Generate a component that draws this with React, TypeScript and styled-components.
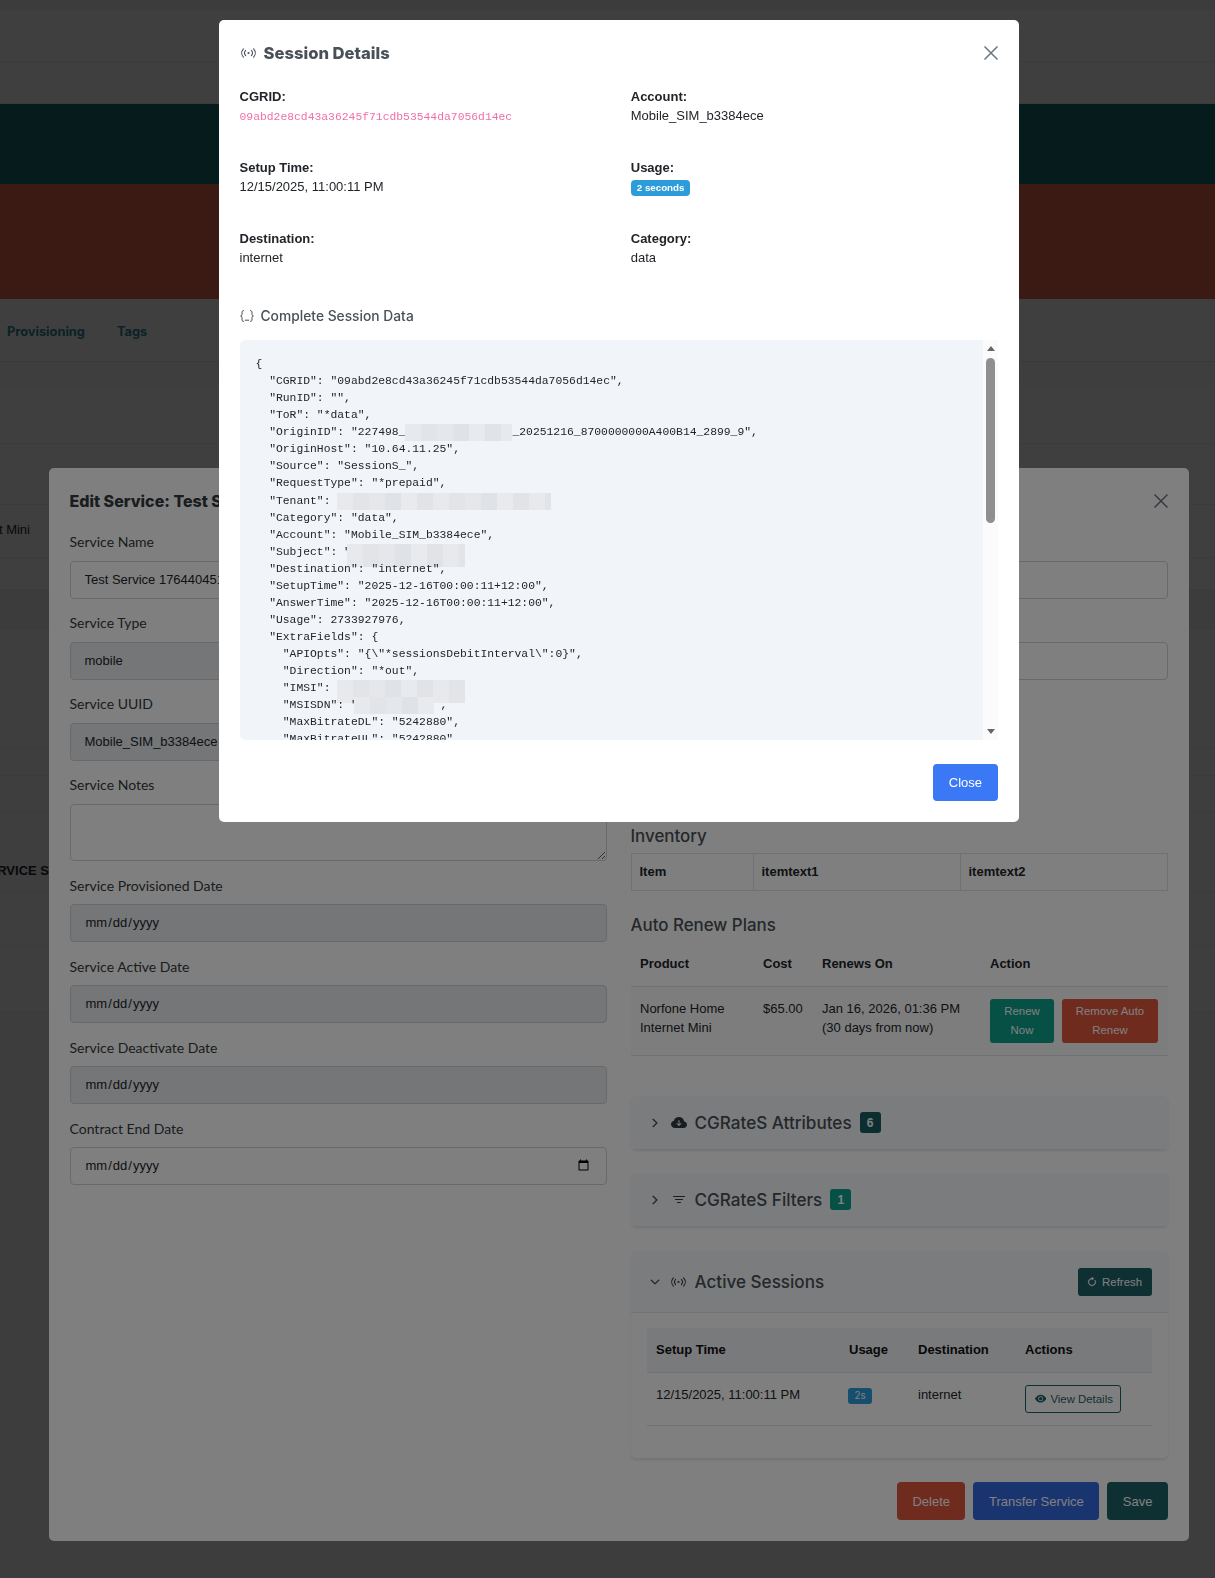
import React from "react";
import styled, { createGlobalStyle } from "styled-components";
import {
  BsChevronDown,
  BsChevronRight,
  BsArrowClockwise,
  BsCloudArrowDownFill,
  BsEyeFill,
  BsFilter,
} from "react-icons/bs";

const SANS = `"Liberation Sans", Arial, sans-serif`;
const HEAD = `Inter, "Open Sans", sans-serif`;
const LABEL = `Lato, "Open Sans", sans-serif`;

const GlobalStyle = createGlobalStyle`
  * { box-sizing: border-box; }
  html, body { margin: 0; height: 1578px; overflow: hidden; background: #fff; }
  body { font-family: ${SANS}; font-size: 13px; line-height: 1.5; color: #212529; }
`;

function CloseIcon() {
  return (
    <svg width="14" height="14" viewBox="0 0 14 14" fill="none" stroke="currentColor" strokeWidth="1.5">
      <path d="M0.5 0.5L13.5 13.5M13.5 0.5L0.5 13.5" />
    </svg>
  );
}

function BroadcastIcon() {
  return (
    <svg width="15" height="10" viewBox="0 0 15 10" fill="none" stroke="currentColor" strokeWidth="1.1" strokeLinecap="round">
      <path d="M2.4 0.8C0.2 3.2 0.2 6.8 2.4 9.2" />
      <path d="M4.6 2.4C3.4 3.8 3.4 6.2 4.6 7.6" />
      <path d="M10.4 2.4C11.6 3.8 11.6 6.2 10.4 7.6" />
      <path d="M12.6 0.8C14.8 3.2 14.8 6.8 12.6 9.2" />
      <circle cx="7.5" cy="5" r="1.1" fill="currentColor" stroke="none" />
    </svg>
  );
}

function BracesIcon() {
  return (
    <svg width="14" height="12" viewBox="0 0 14 12" fill="none" stroke="currentColor" strokeWidth="1" strokeLinecap="round">
      <path d="M3.5 0.6C2 0.6 2 1.6 2 3V4.5C2 5.4 1.4 5.9 0.6 6C1.4 6.1 2 6.6 2 7.5V9C2 10.4 2 11.4 3.5 11.4" />
      <path d="M10.5 0.6C12 0.6 12 1.6 12 3V4.5C12 5.4 12.6 5.9 13.4 6C12.6 6.1 12 6.6 12 7.5V9C12 10.4 12 11.4 10.5 11.4" />
      <path d="M5.2 10.2H8.8" />
    </svg>
  );
}

function JsonBody() {
  return (
    <>
      {`{
  "CGRID": "09abd2e8cd43a36245f71cdb53544da7056d14ec",
  "RunID": "",
  "ToR": "*data",
  "OriginID": "227498_`}
      <Blur $w={107} />
      {`_20251216_8700000000A400B14_2899_9",
  "OriginHost": "10.64.11.25",
  "Source": "SessionS_",
  "RequestType": "*prepaid",
  "Tenant": `}
      <Blur $w={214} />
      {`
  "Category": "data",
  "Account": "Mobile_SIM_b3384ece",
  "Subject": "`}
      <Blur $w={118} $tall $pull />
      {`
  "Destination": "internet",
  "SetupTime": "2025-12-16T00:00:11+12:00",
  "AnswerTime": "2025-12-16T00:00:11+12:00",
  "Usage": 2733927976,
  "ExtraFields": {
    "APIOpts": "{\\"*sessionsDebitInterval\\":0}",
    "Direction": "*out",
    "IMSI": `}
      <Blur $w={128} $tall />
      {`
    "MSISDN": "`}
      <Blur $w={80} $pull />
      {` ,
    "MaxBitrateDL": "5242880",
    "MaxBitrateUL": "5242880"`}
    </>
  );
}

export default function App() {
  return (
    <>
      <GlobalStyle />
      <Page>
        <Strip $h={10} $bg="#f0f0f0" />
        <Strip $h={35} />
        <Strip $h={17} $line />
        <Strip $h={42} $line />
        <Strip $h={80} $bg="#1a6c72" />
        <Strip $h={115} $bg="#f06b52" />
        <TabBar>
          <TabLink>Provisioning</TabLink>
          <TabLink>Tags</TabLink>
        </TabBar>
        <Strip $h={24} $bg="#fafafa" />
        <Strip $h={58} $line />
        <Strip $h={61} $line />
        <Strip $h={53} $line>
          <ClippedCell $w={30} $shift={-3}>
            Internet Mini
          </ClippedCell>
        </Strip>
        <Strip $h={32} $line />
        <Strip $h={39} $line $bg="#f0f0f0" />
        <Strip $h={119} $line $bg="#f8f8f8" />
        <Strip $h={28} $line $bg="#f8f8f8" />
        <Strip $h={36} $line $bg="#f8f8f8" />
        <Strip $h={81} $line $bg="#f8f8f8">
          <ClippedCell $w={49} $shift={38} $bold>
            SERVICE S
          </ClippedCell>
        </Strip>
        <Strip $h={53} $line $bg="#f8f8f8" />
        <Strip $h={66} $line $bg="#f8f8f8" />
      </Page>

      <Backdrop />
      <EditModal>
        <EditHeader>
          <EditTitle>Edit Service: Test Service 1764404512</EditTitle>
          <EditClose>
            <CloseIcon />
          </EditClose>
        </EditHeader>
        <EditColumns>
          <Column>
            <FormField>
              <FormLabel>Service Name</FormLabel>
              <TextInput readOnly value="Test Service 1764404512" />
            </FormField>
            <FormField>
              <FormLabel>Service Type</FormLabel>
              <TextInput disabled value="mobile" />
            </FormField>
            <FormField>
              <FormLabel>Service UUID</FormLabel>
              <TextInput disabled value="Mobile_SIM_b3384ece" />
            </FormField>
            <FormField $loose>
              <FormLabel>Service Notes</FormLabel>
              <NotesInput readOnly />
            </FormField>
            <FormField $loose>
              <FormLabel $tight>Service Provisioned Date</FormLabel>
              <TextInput type="date" disabled />
            </FormField>
            <FormField $loose>
              <FormLabel $tight>Service Active Date</FormLabel>
              <TextInput type="date" disabled />
            </FormField>
            <FormField $loose>
              <FormLabel $tight>Service Deactivate Date</FormLabel>
              <TextInput type="date" disabled />
            </FormField>
            <FormField $loose>
              <FormLabel $tight>Contract End Date</FormLabel>
              <TextInput type="date" />
            </FormField>
          </Column>

          <Column>
            <FormField>
              <FormLabel>Service Status</FormLabel>
              <TextInput readOnly value="" />
            </FormField>
            <FormField>
              <FormLabel>Customer</FormLabel>
              <TextInput readOnly value="" />
            </FormField>

            <InventoryTitle>Inventory</InventoryTitle>
            <InventoryTable>
              <tbody>
                <tr>
                  <InventoryCell $w={122}>Item</InventoryCell>
                  <InventoryCell $w={207}>itemtext1</InventoryCell>
                  <InventoryCell>itemtext2</InventoryCell>
                </tr>
              </tbody>
            </InventoryTable>

            <PlansTitle>Auto Renew Plans</PlansTitle>
            <PlansTable>
              <thead>
                <tr>
                  <PlansHead $w={123}>Product</PlansHead>
                  <PlansHead $w={59}>Cost</PlansHead>
                  <PlansHead $w={168}>Renews On</PlansHead>
                  <PlansHead>Action</PlansHead>
                </tr>
              </thead>
              <tbody>
                <tr>
                  <PlansCell>Norfone Home Internet Mini</PlansCell>
                  <PlansCell>$65.00</PlansCell>
                  <PlansCell>
                    Jan 16, 2026, 01:36 PM
                    <br />
                    (30 days from now)
                  </PlansCell>
                  <ActionCell>
                    <ActionRow>
                      <SmallButton $bg="#0ea08c" $w={64}>
                        Renew Now
                      </SmallButton>
                      <SmallButton $bg="#e0573f" $w={96}>
                        Remove Auto Renew
                      </SmallButton>
                    </ActionRow>
                  </ActionCell>
                </tr>
              </tbody>
            </PlansTable>

            <AccordionItem $top={40}>
              <AccordionHead>
                <ChevronSlot>
                  <BsChevronRight />
                </ChevronSlot>
                <AccordionIcon>
                  <BsCloudArrowDownFill />
                </AccordionIcon>
                <AccordionTitle>CGRateS Attributes</AccordionTitle>
                <CountBadge $bg="#1b5d63">6</CountBadge>
              </AccordionHead>
            </AccordionItem>

            <AccordionItem $top={24}>
              <AccordionHead>
                <ChevronSlot>
                  <BsChevronRight />
                </ChevronSlot>
                <AccordionIcon>
                  <BsFilter />
                </AccordionIcon>
                <AccordionTitle>CGRateS Filters</AccordionTitle>
                <CountBadge $bg="#0ea08c">1</CountBadge>
              </AccordionHead>
            </AccordionItem>

            <AccordionItem $top={25}>
              <AccordionHead $open>
                <ChevronSlot>
                  <BsChevronDown />
                </ChevronSlot>
                <AccordionIcon>
                  <BroadcastIcon />
                </AccordionIcon>
                <AccordionTitle>Active Sessions</AccordionTitle>
                <RefreshButton>
                  <BsArrowClockwise />
                  Refresh
                </RefreshButton>
              </AccordionHead>
              <AccordionBody>
                <SessionsTable>
                  <thead>
                    <tr>
                      <SessionsHead $w={193}>Setup Time</SessionsHead>
                      <SessionsHead $w={69}>Usage</SessionsHead>
                      <SessionsHead $w={107}>Destination</SessionsHead>
                      <SessionsHead>Actions</SessionsHead>
                    </tr>
                  </thead>
                  <tbody>
                    <tr>
                      <SessionsCell>12/15/2025, 11:00:11 PM</SessionsCell>
                      <SessionsCell>
                        <UsagePill>2s</UsagePill>
                      </SessionsCell>
                      <SessionsCell>internet</SessionsCell>
                      <SessionsCell>
                        <DetailsButton>
                          <BsEyeFill />
                          View Details
                        </DetailsButton>
                      </SessionsCell>
                    </tr>
                  </tbody>
                </SessionsTable>
              </AccordionBody>
            </AccordionItem>
          </Column>
        </EditColumns>
        <EditFooter>
          <FooterButton $bg="#e0573f">Delete</FooterButton>
          <FooterButton $bg="#3468e0">Transfer Service</FooterButton>
          <FooterButton $bg="#1d6165">Save</FooterButton>
        </EditFooter>
      </EditModal>

      <Backdrop />
      <SessionModal>
        <SessionHeader>
          <SessionTitleIcon>
            <BroadcastIcon />
          </SessionTitleIcon>
          <SessionTitle>Session Details</SessionTitle>
          <SessionClose>
            <CloseIcon />
          </SessionClose>
        </SessionHeader>
        <SessionGrid>
          <InfoItem>
            <InfoLabel>CGRID:</InfoLabel>
            <HashCode>09abd2e8cd43a36245f71cdb53544da7056d14ec</HashCode>
          </InfoItem>
          <InfoItem>
            <InfoLabel>Account:</InfoLabel>
            <div>Mobile_SIM_b3384ece</div>
          </InfoItem>
          <InfoItem>
            <InfoLabel>Setup Time:</InfoLabel>
            <div>12/15/2025, 11:00:11 PM</div>
          </InfoItem>
          <InfoItem>
            <InfoLabel>Usage:</InfoLabel>
            <UsageBadge>2 seconds</UsageBadge>
          </InfoItem>
          <InfoItem>
            <InfoLabel>Destination:</InfoLabel>
            <div>internet</div>
          </InfoItem>
          <InfoItem>
            <InfoLabel>Category:</InfoLabel>
            <div>data</div>
          </InfoItem>
        </SessionGrid>
        <DataHeading>
          <BracesIcon />
          Complete Session Data
        </DataHeading>
        <JsonFrame>
          <JsonBlock>
            <JsonBody />
          </JsonBlock>
          <ScrollRail>
            <ScrollArrow $up />
            <ScrollThumb />
            <ScrollArrow />
          </ScrollRail>
        </JsonFrame>
        <SessionFooter>
          <PrimaryButton>Close</PrimaryButton>
        </SessionFooter>
      </SessionModal>
    </>
  );
}

const Page = styled.div`
  height: 1578px;
  background: #f7f7f7;
`;

const Strip = styled.div<{ $h: number; $bg?: string; $line?: boolean }>`
  display: flex;
  align-items: center;
  height: ${(p) => p.$h}px;
  background: ${(p) => p.$bg || "#ffffff"};
  border-bottom: ${(p) => (p.$line ? "1px solid #ececec" : "0")};
`;

const TabBar = styled.div`
  display: flex;
  align-items: center;
  gap: 32px;
  height: 63px;
  padding: 3px 0 0 7px;
  background: #ffffff;
  border-bottom: 1px solid #e4e4e4;
`;

const TabLink = styled.a`
  font-family: ${HEAD};
  font-size: 12.8px;
  font-weight: 700;
  color: #2a8a98;
`;

const ClippedCell = styled.div<{ $w: number; $shift: number; $bold?: boolean }>`
  display: flex;
  justify-content: flex-end;
  width: ${(p) => p.$w}px;
  margin-top: ${(p) => p.$shift}px;
  overflow: hidden;
  white-space: nowrap;
  font-weight: ${(p) => (p.$bold ? 700 : 400)};
`;

const Backdrop = styled.div`
  position: fixed;
  inset: 0;
  background: rgba(0, 0, 0, 0.5);
`;

const EditModal = styled.div`
  position: fixed;
  left: 49px;
  top: 468px;
  width: 1140px;
  height: 1073px;
  padding: 0 21px 0 20.5px;
  background: #ffffff;
  border-radius: 5px;
`;

const EditHeader = styled.div`
  display: flex;
  align-items: center;
  justify-content: space-between;
  height: 64px;
`;

const EditTitle = styled.div`
  padding-top: 1px;
  font-family: ${HEAD};
  font-size: 16px;
  font-weight: 800;
  color: #343a40;
`;

const EditClose = styled.div`
  display: flex;
  margin: 1px 0 0;
  color: #6c757d;
`;

const EditColumns = styled.div`
  display: grid;
  grid-template-columns: 537px 537px;
  column-gap: 24px;
`;

const Column = styled.div`
  display: flex;
  flex-direction: column;
`;

const FormField = styled.div<{ $loose?: boolean }>`
  margin-bottom: ${(p) => (p.$loose ? "15px" : "14px")};
`;

const FormLabel = styled.label<{ $tight?: boolean }>`
  display: block;
  height: 20px;
  margin-bottom: ${(p) => (p.$tight ? "8px" : "9px")};
  font-family: ${LABEL};
  font-size: 14px;
  line-height: 20px;
  color: #343a40;
`;

const TextInput = styled.input`
  display: block;
  width: 100%;
  height: 38px;
  padding: 0 14px 2px;
  font-family: ${SANS};
  font-size: 13px;
  color: #212529;
  background: #ffffff;
  border: 1px solid #ced4da;
  border-radius: 4px;
  &:disabled {
    background: #e9ecef;
    opacity: 1;
  }
`;

const NotesInput = styled.textarea`
  display: block;
  width: 100%;
  height: 57px;
  background: #ffffff;
  border: 1px solid #ced4da;
  border-radius: 4px;
`;

const InventoryTitle = styled.h5`
  margin: 130px 0 5px;
  font-family: ${HEAD};
  font-size: 16.9px;
  font-weight: 500;
  line-height: 24px;
  color: #495057;
`;

const InventoryTable = styled.table`
  width: 100%;
  height: 38px;
  border-collapse: collapse;
  table-layout: fixed;
`;

const InventoryCell = styled.td<{ $w?: number }>`
  width: ${(p) => (p.$w ? `${p.$w}px` : "auto")};
  padding: 0 8px;
  font-weight: 700;
  border: 1px solid #dee2e6;
`;

const PlansTitle = styled.h5`
  margin: 22px 0 4px;
  font-family: ${HEAD};
  font-size: 16.9px;
  font-weight: 500;
  line-height: 24px;
  color: #495057;
`;

const PlansTable = styled.table`
  width: 100%;
  border-collapse: collapse;
  table-layout: fixed;
`;

const PlansHead = styled.th<{ $w?: number }>`
  width: ${(p) => (p.$w ? `${p.$w}px` : "auto")};
  height: 45px;
  padding: 0 9px 0 9.5px;
  text-align: left;
  font-weight: 700;
  border-bottom: 1px solid #dee2e6;
`;

const PlansCell = styled.td`
  height: 68px;
  padding: 12px 9px 12px 9.5px;
  vertical-align: top;
  line-height: 19.5px;
  background: #fbfbfb;
  border-bottom: 1px solid #dee2e6;
`;

const ActionCell = styled(PlansCell)`
  padding-top: 12.5px;
`;

const ActionRow = styled.div`
  display: flex;
  gap: 8px;
`;

const SmallButton = styled.button<{ $bg: string; $w: number }>`
  width: ${(p) => p.$w}px;
  height: 44px;
  padding: 0 8px;
  font-family: ${SANS};
  font-size: 11.4px;
  line-height: 19px;
  color: #ffffff;
  background: ${(p) => p.$bg};
  border: 0;
  border-radius: 3px;
`;

const AccordionItem = styled.div<{ $top: number }>`
  margin-top: ${(p) => p.$top}px;
  background: #ffffff;
  border-radius: 5px;
  box-shadow: 0 2px 3px rgba(0, 0, 0, 0.1);
`;

const AccordionHead = styled.div<{ $open?: boolean }>`
  display: flex;
  align-items: center;
  height: ${(p) => (p.$open ? "62px" : "53px")};
  padding: 0 16px 0 19.5px;
  background: #f6f8fa;
  border-radius: 5px 5px 0 0;
  border-bottom: ${(p) => (p.$open ? "1px solid #e5e7eb" : "0")};
`;

const ChevronSlot = styled.span`
  display: flex;
  width: 20.5px;
  font-size: 10px;
  color: #343a40;
  svg {
    stroke: currentColor;
    stroke-width: 1.2px;
  }
`;

const AccordionIcon = styled.span`
  display: flex;
  justify-content: center;
  width: 16px;
  margin-right: 8px;
  font-size: 16px;
  color: #343a40;
`;

const AccordionTitle = styled.div`
  font-family: ${HEAD};
  font-size: 17.1px;
  font-weight: 500;
  color: #495057;
`;

const CountBadge = styled.span<{ $bg: string }>`
  display: flex;
  align-items: center;
  justify-content: center;
  min-width: 21px;
  height: 21px;
  margin-left: 8px;
  padding: 0 7px;
  font-size: 12px;
  font-weight: 700;
  color: #ffffff;
  background: ${(p) => p.$bg};
  border-radius: 3px;
`;

const RefreshButton = styled.button`
  display: flex;
  align-items: center;
  gap: 5px;
  height: 28px;
  margin-left: auto;
  padding: 0 9.5px;
  font-family: ${SANS};
  font-size: 11.4px;
  color: #ffffff;
  background: #1d6165;
  border: 0;
  border-radius: 3px;
  svg {
    font-size: 10px;
    stroke: currentColor;
    stroke-width: 0.8px;
  }
`;

const AccordionBody = styled.div`
  padding: 15px 16px 32px;
`;

const SessionsTable = styled.table`
  width: 100%;
  border-collapse: collapse;
  table-layout: fixed;
`;

const SessionsHead = styled.th<{ $w?: number }>`
  width: ${(p) => (p.$w ? `${p.$w}px` : "auto")};
  height: 44px;
  padding: 0 9px 0 9.5px;
  text-align: left;
  font-weight: 700;
  color: #111;
  background: #f3f4f6;
  border-bottom: 1px solid #e5e7eb;
`;

const SessionsCell = styled.td`
  height: 53px;
  padding: 12px 9px 12px 9.5px;
  vertical-align: top;
  border-bottom: 1px solid #dee2e6;
`;

const UsagePill = styled.span`
  display: inline-block;
  width: 24px;
  height: 16px;
  margin: 3px 0 0 -1px;
  font-family: ${HEAD};
  font-size: 9.75px;
  line-height: 16px;
  text-align: center;
  color: #ffffff;
  background: #2d9cdb;
  border-radius: 3px;
`;

const DetailsButton = styled.button`
  display: flex;
  align-items: center;
  gap: 4px;
  width: 96px;
  height: 28px;
  padding: 0 0 0 9px;
  font-family: ${SANS};
  font-size: 11.4px;
  white-space: nowrap;
  color: #1d6165;
  background: transparent;
  border: 1px solid #1d6165;
  border-radius: 3px;
`;

const EditFooter = styled.div`
  position: absolute;
  right: 21px;
  bottom: 21px;
  display: flex;
  gap: 8px;
`;

const FooterButton = styled.button<{ $bg: string }>`
  height: 38px;
  padding: 0 15.5px;
  font-family: ${SANS};
  font-size: 13px;
  color: #ffffff;
  background: ${(p) => p.$bg};
  border: 0;
  border-radius: 4px;
`;

const SessionModal = styled.div`
  position: fixed;
  left: 219px;
  top: 20px;
  width: 800px;
  padding: 0 21px 21px 20.5px;
  background: #ffffff;
  border-radius: 5px;
`;

const SessionHeader = styled.div`
  display: flex;
  align-items: center;
  height: 66px;
`;

const SessionTitleIcon = styled.span`
  display: flex;
  margin: 0 8px 0 1px;
  color: #495057;
`;

const SessionTitle = styled.div`
  padding-top: 1px;
  font-family: ${HEAD};
  font-size: 16.6px;
  font-weight: 800;
  color: #495057;
`;

const SessionClose = styled.div`
  display: flex;
  margin-left: auto;
  color: #6c757d;
`;

const SessionGrid = styled.div`
  display: grid;
  grid-template-columns: 1fr 1fr;
  column-gap: 24px;
`;

const InfoItem = styled.div`
  height: 71px;
`;

const InfoLabel = styled.div`
  height: 19.5px;
  padding-top: 1px;
  font-weight: 700;
`;

const HashCode = styled.code`
  display: block;
  margin-top: 2px;
  font-family: "Liberation Mono", monospace;
  font-size: 11.375px;
  line-height: 19.5px;
  color: #f06fa8;
`;

const UsageBadge = styled.span`
  display: inline-block;
  height: 16px;
  margin-top: 3px;
  padding: 0 6px;
  font-size: 9.75px;
  font-weight: 700;
  line-height: 16px;
  color: #ffffff;
  background: #2d9cdb;
  border-radius: 4px;
  vertical-align: top;
`;

const DataHeading = styled.div`
  display: flex;
  align-items: center;
  gap: 7px;
  height: 20px;
  margin: 7px 0 14px;
  font-family: ${HEAD};
  font-size: 13.8px;
  font-weight: 500;
  color: #495057;
`;

const JsonFrame = styled.div`
  display: flex;
  height: 400px;
`;

const JsonBlock = styled.pre`
  flex: 1;
  min-width: 0;
  margin: 0;
  padding: 16px;
  overflow: hidden;
  font-family: "Liberation Mono", monospace;
  font-size: 11.375px;
  line-height: 17.06px;
  color: #212529;
  background: #f1f5f9;
  border-radius: 5px 0 0 5px;
`;

const ScrollRail = styled.div`
  display: flex;
  flex-direction: column;
  align-items: center;
  justify-content: space-between;
  width: 15px;
  padding: 6px 0;
  background: #fbfbfb;
`;

const ScrollArrow = styled.span<{ $up?: boolean }>`
  width: 0;
  height: 0;
  border-left: 4.5px solid transparent;
  border-right: 4.5px solid transparent;
  border-bottom: ${(p) => (p.$up ? "5px solid #666666" : "0")};
  border-top: ${(p) => (p.$up ? "0" : "5px solid #666666")};
`;

const ScrollThumb = styled.span`
  width: 9px;
  height: 165px;
  margin: 7px 0 auto;
  background: #8f8f8f;
  border-radius: 4.5px;
`;

const Blur = styled.span<{ $w: number; $tall?: boolean; $pull?: boolean }>`
  display: inline-block;
  width: ${(p) => p.$w}px;
  height: ${(p) => (p.$tall ? "23px" : "17px")};
  margin-left: ${(p) => (p.$pull ? "-4px" : "0")};
  margin-bottom: ${(p) => (p.$tall ? "-6px" : "0")};
  vertical-align: top;
  background-color: #e3e5e9;
  background-image: linear-gradient(
    90deg,
    #e7e9ec 0 16px,
    #e2e4e8 16px 32px,
    #e5e7ea 32px 48px,
    #dfe2e6 48px 64px,
    #e8eaed 64px 80px,
    #e1e3e7 80px 96px
  );
  background-size: 96px 100%;
`;

const SessionFooter = styled.div`
  display: flex;
  justify-content: flex-end;
  margin-top: 24px;
`;

const PrimaryButton = styled.button`
  height: 37px;
  padding: 0 16px;
  font-family: ${SANS};
  font-size: 13px;
  color: #ffffff;
  background: #3b78f5;
  border: 0;
  border-radius: 4px;
`;
